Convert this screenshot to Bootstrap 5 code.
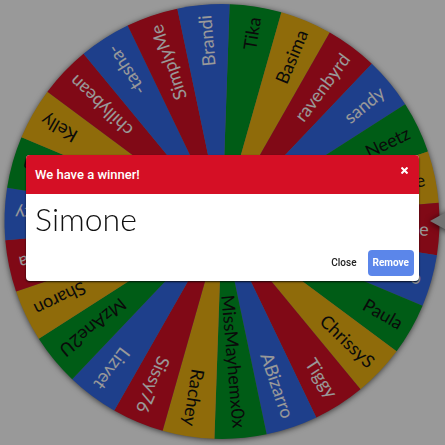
<!DOCTYPE html>
<html lang="en">
<head>
<meta charset="utf-8">
<meta name="viewport" content="width=device-width, initial-scale=1">
<title>We have a winner!</title>
<link href="https://cdn.jsdelivr.net/npm/bootstrap@5.3.0/dist/css/bootstrap.min.css" rel="stylesheet">
<style>
  body { background: #fff; font-family: Roboto, sans-serif; }
  .wheel text { font: 400 18px Lato, sans-serif; text-anchor: end; dominant-baseline: central; }
  .wheel .on-dark { fill: #fff; }
  .wheel .on-light { fill: #111; }
  .wheel-shadow { filter: drop-shadow(0 1px 3px rgba(0, 0, 0, .7)); }
  .backdrop-layer { background: rgba(0, 0, 0, .4); padding: 0 26px 9px; }
  .winner { border-radius: 4px; box-shadow: 0 1px 2px rgba(0, 0, 0, .8); }
  .winner-head { background: #d50f25; padding: 10px 9px; min-height: 39px; }
  .winner-head h1 { font-size: 13px; line-height: 19px; font-weight: 500; }
  .winner-close { line-height: 0; padding: 2px; }
  .winner-name { font: 300 32px/36px Lato, sans-serif; color: #111; padding: 7px 9px 0; }
  .winner-foot { padding: 13px 5px 5px; gap: 6px; }
  .winner-foot .btn { font-size: 10px; line-height: 24px; padding: 0 4px; border-radius: 4px; color: #222; font-weight: 500; }
  .winner-foot .btn-remove { background: #5b86ea; color: #fff; font-weight: 700; }
</style>
<script src="https://cdn.jsdelivr.net/npm/bootstrap@5.3.0/dist/js/bootstrap.bundle.min.js"></script>
</head>
<body>
<main>
  <svg class="wheel d-block w-100" viewBox="0 0 445 445" role="img" aria-label="Wheel of names">
    <g class="wheel-shadow"><circle cx="222" cy="221.5" r="217" fill="#888"/></g>
    <g id="slices" transform="translate(222 221.5)"></g>
    <path class="wheel-shadow" d="M430 221 L470 199 V243 Z" fill="#c0c0c0"/>
  </svg>
</main>
<div class="backdrop-layer position-fixed top-0 start-0 w-100 h-100 d-flex align-items-center">
  <section class="winner bg-white w-100 overflow-hidden" role="dialog" aria-labelledby="winner-title">
    <header class="winner-head d-flex justify-content-between align-items-start text-white">
      <h1 id="winner-title" class="m-0">We have a winner!</h1>
      <button type="button" class="winner-close btn border-0 text-white" aria-label="Close dialog">
        <svg width="7" height="7" viewBox="0 0 7 7" stroke="currentColor" stroke-width="2"><path d="M.5 .5l6 6M6.5 .5l-6 6"/></svg>
      </button>
    </header>
    <p class="winner-name m-0">Simone</p>
    <footer class="winner-foot d-flex justify-content-end">
      <button type="button" class="btn">Close</button>
      <button type="button" class="btn btn-remove">Remove</button>
    </footer>
  </section>
</div>
<script>
  const slices = [
    ['Tika', 'g'], ['Basima', 'y'], ['ravenbyrd', 'r'], ['sandy', 'b'],
    ['Neetz', 'g'], ['e', 'y'], ['Simone', 'r'], ['o', 'b'],
    ['Paula', 'g'], ['ChrissyS', 'y'], ['Tiggy', 'r'], ['ABizarro', 'b'],
    ['MissMayhemx0x', 'g'], ['Rachey', 'y'], ['Sissy76', 'r'], ['Lizvet', 'b'],
    ['MzAne2U', 'g'], ['Sharon', 'y'], ['a', 'r'], ['ty', 'b'],
    ['a', 'g'], ['Kelly', 'y'], ['chillybean', 'r'], ['-tasha-', 'b'],
    ['SimplyMe', 'r'], ['Brandi', 'b']
  ];
  const fills = { g: '#009925', y: '#eeb211', r: '#d50f25', b: '#3369e8' };
  const layer = document.getElementById('slices');
  const step = 360 / slices.length, radius = 217.5;
  const add = (tag, attrs) => {
    const el = document.createElementNS('http://www.w3.org/2000/svg', tag);
    for (const key in attrs) el.setAttribute(key, attrs[key]);
    return layer.appendChild(el);
  };
  const half = step * Math.PI / 360;
  const x = radius * Math.cos(half), y = radius * Math.sin(half);
  slices.forEach(([name, c], i) => {
    const transform = `rotate(${-88 + step * (i + .5)})`;
    add('path', { d: `M0 0L${x} ${-y}A${radius} ${radius} 0 0 1 ${x} ${y}Z`, fill: fills[c], transform });
    add('text', { x: 207, y: 0, transform, class: 'rb'.includes(c) ? 'on-dark' : 'on-light' }).textContent = name;
  });
</script>
</body>
</html>
